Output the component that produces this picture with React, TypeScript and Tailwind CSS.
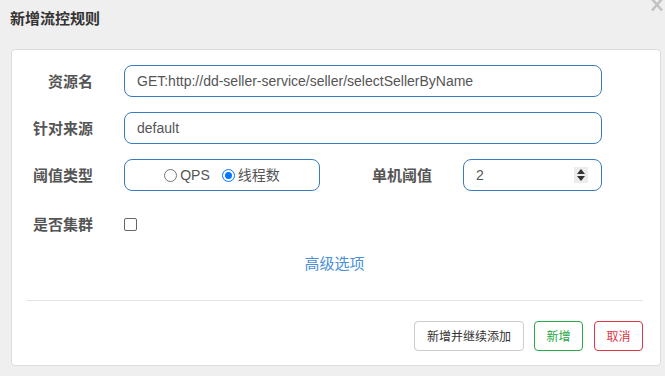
import React from "react";

const cjk = "font-['Microsoft_YaHei','Noto_Sans_CJK_SC',sans-serif]";

function Label({ text, className = "" }: { text: string; className?: string }) {
  return (
    <div className={`text-right text-[15px] font-bold text-[#555] leading-[32px] ${className}`}>{text}</div>
  );
}

function Radio({ checked, label }: { checked?: boolean; label: string }) {
  return (
    <div className="flex items-center">
      {checked ? (
        <span className="w-[13px] h-[13px] rounded-full border-[1.5px] border-[#0075ff] flex items-center justify-center">
          <span className="w-[7px] h-[7px] rounded-full bg-[#0075ff]" />
        </span>
      ) : (
        <span className="w-[13px] h-[13px] rounded-full border border-[#767676] bg-white" />
      )}
      <span className="ml-[3px] text-[14px] text-[#555] font-['Liberation_Sans','Noto_Sans_CJK_SC',sans-serif]">{label}</span>
    </div>
  );
}

export default function App() {
  return (
    <div className={`w-[665px] h-[376px] bg-[#efefef] relative overflow-hidden ${cjk}`}>
      <div className="h-[49px] pl-[10px] pt-[7px]">
        <h4 className="text-[15px] font-bold text-[#333] leading-[22px]">新增流控规则</h4>
      </div>
      <svg className="absolute right-[2px] top-0" width="12" height="12" viewBox="0 0 12 12">
        <path d="M1 -1 L11 10.5 M11 -1 L1 10.5" stroke="#c2c2c2" strokeWidth="2.6" fill="none" />
      </svg>

      <div className="mx-[11px] w-[650px] h-[317px] bg-white border border-[#dcdcdc] rounded-[4px] pt-[15px] pl-[14px] pr-[17px]">
        <div className="flex items-center h-[32px]">
          <Label text="资源名" className="w-[67px]" />
          <div className="ml-[31px] w-[478px] h-[32px] border border-[#3a7bbf] rounded-[8px] pl-[12px] flex items-center text-[14px] text-[#555] font-['Liberation_Sans',sans-serif]">
            GET:http://dd-seller-service/seller/selectSellerByName
          </div>
        </div>

        <div className="flex items-center h-[32px] mt-[15px]">
          <Label text="针对来源" className="w-[67px]" />
          <div className="ml-[31px] w-[478px] h-[32px] border border-[#3a7bbf] rounded-[8px] pl-[12px] flex items-center text-[14px] text-[#555] font-['Liberation_Sans',sans-serif]">
            default
          </div>
        </div>

        <div className="flex items-center h-[32px] mt-[15px]">
          <Label text="阈值类型" className="w-[67px]" />
          <div className="ml-[31px] w-[196px] h-[32px] border border-[#3a7bbf] rounded-[8px] flex items-center justify-center gap-[12px]">
            <Radio label="QPS" />
            <Radio checked label="线程数" />
          </div>
          <Label text="单机阈值" className="w-[112px]" />
          <div className="ml-[31px] w-[139px] h-[32px] border border-[#3a7bbf] rounded-[8px] pl-[12px] pr-[13px] flex items-center justify-between text-[14px] text-[#555] font-['Liberation_Sans',sans-serif]">
            <span>2</span>
            <span className="w-[14px] h-[16px] bg-[#ececec] flex flex-col items-center justify-center gap-[2px]">
              <svg width="8" height="5" viewBox="0 0 8 5">
                <path d="M4 0 L8 5 L0 5 Z" fill="#333" />
              </svg>
              <svg width="8" height="5" viewBox="0 0 8 5">
                <path d="M0 0 L8 0 L4 5 Z" fill="#333" />
              </svg>
            </span>
          </div>
        </div>

        <div className="flex items-center h-[32px] mt-[17px]">
          <Label text="是否集群" className="w-[67px]" />
          <span className="ml-[31px] w-[13px] h-[13px] border border-[#666] rounded-[2px] bg-white" />
        </div>

        <div className="mt-[13px] text-center text-[15px] leading-[20px] text-[#4a8fd6]">高级选项</div>

        <div className="mt-[27px] h-px bg-[#e3e3e3]" />

        <div className="mt-[20px] flex justify-end text-[12px]">
          <button className="w-[110px] h-[30px] border border-[#cccccc] rounded-[4px] bg-white text-[#333]">新增并继续添加</button>
          <button className="ml-[10px] w-[49px] h-[30px] border border-[#28a745] rounded-[4px] bg-white text-[#28a745]">新增</button>
          <button className="ml-[11px] w-[49px] h-[30px] border border-[#dc3545] rounded-[4px] bg-white text-[#dc3545]">取消</button>
        </div>
      </div>
    </div>
  );
}
